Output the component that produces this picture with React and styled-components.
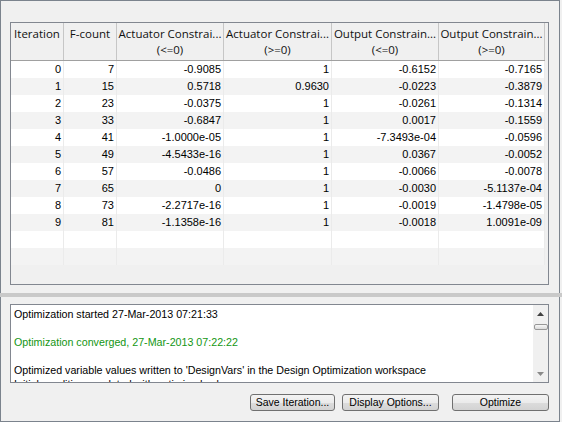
import React from "react";
import styled, { createGlobalStyle } from "styled-components";

const Global = createGlobalStyle`
  html, body { margin: 0; padding: 0; background: #f0f0f0; }
  #root { width: 562px; height: 422px; }
`;

const COLS = "53px 53px 107px 108px 107px 106px";
const PANEL_BORDER = "#7b838d";

const Window = styled.div`
  width: 560px;
  height: 422px;
  display: flex;
  flex-direction: column;
  background: #f0f0f0;
`;

const TopPanel = styled.div`
  height: 293px;
  box-sizing: border-box;
  border: 1px solid ${PANEL_BORDER};
  border-bottom: none;
  padding: 21px 10px 8px 9px;
  display: flex;
`;

const Splitter = styled.div`
  height: 4px;
  width: 562px;
  background: #c9c9c9;
`;

const BottomPanel = styled.div`
  flex: 1;
  box-sizing: border-box;
  border: 1px solid ${PANEL_BORDER};
  border-top: none;
  padding: 7px 10px 10px 9px;
  display: flex;
  flex-direction: column;
`;

const TableFrame = styled.div`
  flex: 1;
  border: 1px solid #828790;
  background: #f0f0f0;
  display: flex;
  flex-direction: column;
  overflow: hidden;
`;

const HeaderRow = styled.div`
  display: grid;
  grid-template-columns: ${COLS};
  height: 38px;
  box-sizing: border-box;
  border-bottom: 1px solid #a0a0a0;
  width: 534px;
`;

const HeaderCell = styled.div`
  border-right: 1px solid #c6c6c6;
  padding-top: 3px;
  display: flex;
  flex-direction: column;
  align-items: center;
  font-family: "Open Sans", "Noto Sans", sans-serif;
  font-size: 11.5px;
  line-height: 16px;
  color: #111;
  white-space: nowrap;
  overflow: hidden;
`;

const BodyRow = styled.div`
  display: grid;
  grid-template-columns: ${COLS};
  height: 17px;
  width: 534px;
  background: ${(p) => (p.$odd ? "#f3f3f3" : "#ffffff")};
`;

const BodyCell = styled.div`
  border-right: 1px solid #ebebeb;
  padding-right: 2px;
  text-align: right;
  font-family: "Liberation Sans", Arial, sans-serif;
  font-size: 11px;
  line-height: 17px;
  color: #000;
  white-space: nowrap;
  overflow: hidden;
`;

const OutputBox = styled.div`
  height: 79px;
  box-sizing: border-box;
  border: 1px solid #828790;
  background: #fff;
  display: flex;
`;

const OutputText = styled.div`
  flex: 1;
  padding: 2px 0 0 3px;
  overflow: hidden;
  font-family: "Liberation Sans", Arial, sans-serif;
  font-size: 10.7px;
  line-height: 14px;
  color: #000;
`;

const Line = styled.div`
  height: 14px;
  white-space: nowrap;
  color: ${(p) => p.$color || "#000"};
`;

const ScrollBar = styled.div`
  width: 15px;
  background: #f0f0f0;
  display: flex;
  flex-direction: column;
  align-items: center;
`;

const ArrowBox = styled.div`
  height: 17px;
  width: 15px;
  display: flex;
  align-items: center;
  justify-content: center;
  margin-top: ${(p) => (p.$bottom ? "auto" : "0")};
`;

const Thumb = styled.div`
  margin-top: 2px;
  width: 12px;
  height: 4px;
  border: 1px solid #979797;
  border-radius: 2px;
  background: linear-gradient(#f7f7f7, #dadada);
`;

const ButtonRow = styled.div`
  display: flex;
  justify-content: flex-end;
  margin-top: 11px;
`;

const Button = styled.button`
  height: 17px;
  width: ${(p) => p.$w}px;
  margin-left: ${(p) => p.$gap || 0}px;
  padding: 0;
  box-sizing: border-box;
  border: 1px solid #707070;
  border-radius: 3px;
  background: linear-gradient(#f3f3f3 0%, #ebebeb 50%, #dcdcdc 51%, #d3d3d3 100%);
  font-family: "Liberation Sans", Arial, sans-serif;
  font-size: 10.5px;
  line-height: 15px;
  color: #000;
`;

const headers = [
  ["Iteration", ""],
  ["F-count", ""],
  ["Actuator Constrai...", "(<=0)"],
  ["Actuator Constrai...", "(>=0)"],
  ["Output Constrain...", "(<=0)"],
  ["Output Constrain...", "(>=0)"],
];

const rows = [
  ["0", "7", "-0.9085", "1", "-0.6152", "-0.7165"],
  ["1", "15", "0.5718", "0.9630", "-0.0223", "-0.3879"],
  ["2", "23", "-0.0375", "1", "-0.0261", "-0.1314"],
  ["3", "33", "-0.6847", "1", "0.0017", "-0.1559"],
  ["4", "41", "-1.0000e-05", "1", "-7.3493e-04", "-0.0596"],
  ["5", "49", "-4.5433e-16", "1", "0.0367", "-0.0052"],
  ["6", "57", "-0.0486", "1", "-0.0066", "-0.0078"],
  ["7", "65", "0", "1", "-0.0030", "-5.1137e-04"],
  ["8", "73", "-2.2717e-16", "1", "-0.0019", "-1.4798e-05"],
  ["9", "81", "-1.1358e-16", "1", "-0.0018", "1.0091e-09"],
  ["", "", "", "", "", ""],
  ["", "", "", "", "", ""],
];

const UpArrow = ({ color }) => (
  <svg width="7" height="4" viewBox="0 0 7 4">
    <polygon points="3.5,0 7,4 0,4" fill={color} />
  </svg>
);

const DownArrow = ({ color }) => (
  <svg width="7" height="4" viewBox="0 0 7 4">
    <polygon points="0,0 7,0 3.5,4" fill={color} />
  </svg>
);

export default function App() {
  return (
    <>
      <Global />
      <Window>
        <TopPanel>
          <TableFrame>
            <HeaderRow>
              {headers.map(([a, b], i) => (
                <HeaderCell key={i}>
                  <span>{a}</span>
                  <span>{b}</span>
                </HeaderCell>
              ))}
            </HeaderRow>
            {rows.map((r, i) => (
              <BodyRow key={i} $odd={i % 2 === 1}>
                {r.map((v, j) => (
                  <BodyCell key={j}>{v}</BodyCell>
                ))}
              </BodyRow>
            ))}
          </TableFrame>
        </TopPanel>
        <Splitter />
        <BottomPanel>
          <OutputBox>
            <OutputText>
              <Line>Optimization started 27-Mar-2013 07:21:33</Line>
              <Line />
              <Line $color="#139613">Optimization converged, 27-Mar-2013 07:22:22</Line>
              <Line />
              <Line>Optimized variable values written to 'DesignVars' in the Design Optimization workspace</Line>
              <Line>Initial conditions updated with optimized values.</Line>
            </OutputText>
            <ScrollBar>
              <ArrowBox>
                <UpArrow color="#404040" />
              </ArrowBox>
              <Thumb />
              <ArrowBox $bottom>
                <DownArrow color="#8a8a8a" />
              </ArrowBox>
            </ScrollBar>
          </OutputBox>
          <ButtonRow>
            <Button $w={85}>Save Iteration...</Button>
            <Button $w={97} $gap={7}>Display Options...</Button>
            <Button $w={97} $gap={13}>Optimize</Button>
          </ButtonRow>
        </BottomPanel>
      </Window>
    </>
  );
}
